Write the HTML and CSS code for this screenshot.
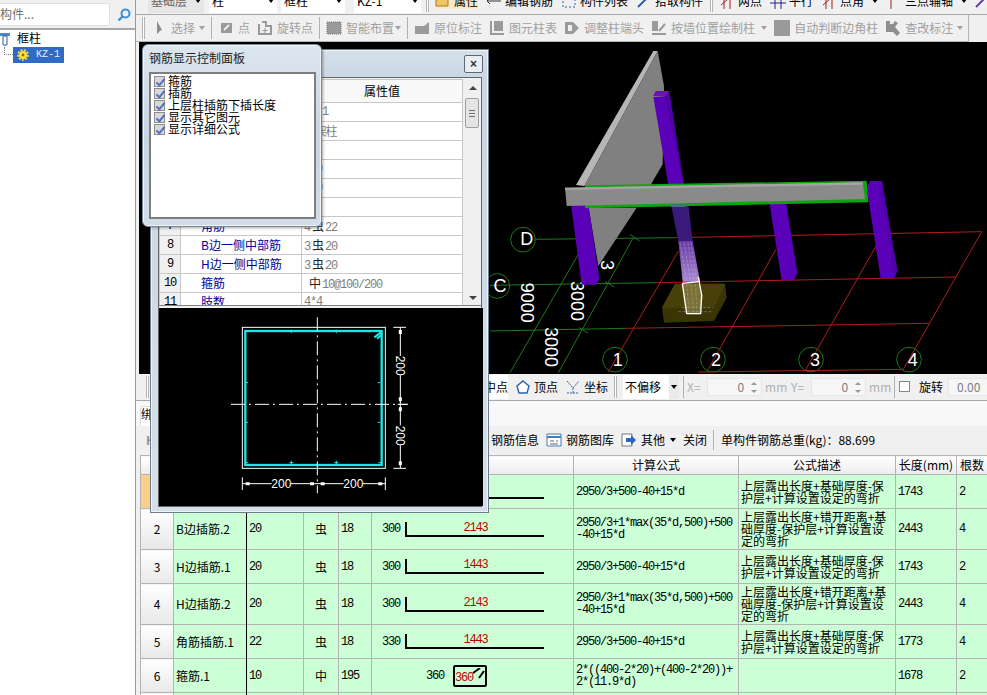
FILE: index.html
```html
<!DOCTYPE html>
<html lang="zh">
<head>
<meta charset="utf-8">
<title>钢筋显示控制面板</title>
<link rel="stylesheet" href="styles.css">
</head>
<body>
<div class="app">
  <aside class="side">
    <div class="search">
      <div class="search-box">构件...</div>
      <svg class="search-icon" width="14" height="14" viewBox="0 0 14 14"><circle cx="8.5" cy="5.5" r="4" fill="none" stroke="#3d8fd0" stroke-width="2"/><path d="M5.5 8.5 1.5 12.5" stroke="#3d8fd0" stroke-width="2.4"/></svg>
    </div>
    <div class="tree">
      <div class="tree-root">
        <svg width="10" height="14" viewBox="0 0 10 14"><path d="M0 1h10v3H0z" fill="#4a86c8"/><path d="M3 4h4v9H3z" fill="#fff" stroke="#2a5f9e"/></svg>
        <span>框柱</span>
      </div>
      <div class="tree-leaf">
        <i class="tree-link"></i>
        <div class="tree-sel">
          <svg width="12" height="12" viewBox="0 0 12 12"><circle cx="6" cy="6" r="4" fill="#ffe23a"/><circle cx="6" cy="6" r="5" fill="none" stroke="#ffe23a" stroke-width="1.6" stroke-dasharray="2 1.4"/><circle cx="6" cy="6" r="1.4" fill="#8a6a00"/></svg>
          <span class="tree-name">KZ-1</span>
        </div>
      </div>
    </div>
  </aside>

  <main class="main">
    <div class="bar-top">
      <div class="bar-top-in">
        <span class="sel s1">基础层<i class="arrow"></i></span>
        <span class="sel s2">柱<i class="arrow"></i></span>
        <span class="sel s3">框柱<i class="arrow"></i></span>
        <span class="sel s4">KZ-1<i class="arrow"></i></span>
        <i class="grip g1"></i>
        <span class="ti on"><svg class="ic" viewBox="0 0 16 16"><path d="M1 3h12v10H1z" fill="#f2c46a" stroke="#a87a20"/></svg>属性</span>
        <span class="ti"><svg class="ic" viewBox="0 0 16 16"><path d="M1 8h14M4 5l-3 3 3 3" stroke="#333" fill="none"/></svg>编辑钢筋</span>
        <span class="ti"><svg class="ic" viewBox="0 0 16 16"><path d="M2 2h12v12H2z" fill="none" stroke="#2a62a8" stroke-dasharray="2 2"/></svg>构件列表</span>
        <span class="ti"><svg class="ic" viewBox="0 0 16 16"><path d="M2 14 13 3" stroke="#2a62a8" stroke-width="2"/></svg>拾取构件</span>
        <i class="grip g2"></i>
        <span class="ti"><svg class="ic" viewBox="0 0 16 16"><path d="M2 12 14 2M5 0v16M11 0v16" stroke="#a02020"/></svg>两点</span>
        <span class="ti"><svg class="ic" viewBox="0 0 16 16"><path d="M0 4h16M0 10h16M5 0v16M11 0v16" stroke="#22228a"/></svg>平行</span>
        <span class="ti"><svg class="ic" viewBox="0 0 16 16"><path d="M2 12 14 2M5 0v16M11 0v16" stroke="#a02020"/></svg>点角<i class="arrow a-gap"></i></span>
        <span class="ti"><svg class="ic" viewBox="0 0 16 16"><path d="M1 4h15M5 0v16" stroke="#a02020"/></svg>三点辅轴<i class="arrow a-gap"></i></span>
        <svg class="ic" viewBox="0 0 16 16"><path d="M2 14 14 2" stroke="#6a3aa0" stroke-width="2"/></svg>
      </div>
    </div>

    <div class="bar-tools">
      <div class="tools">
        <i class="grip"></i>
        <span class="ti first"><svg class="ic" viewBox="0 0 16 16"><path d="M9 1v13l3-3 2-1z" fill="#8e8e8e" transform="translate(-3 0)"/></svg>选择<i class="caret"></i></span>
        <i class="sep"></i>
        <span class="ti"><svg class="ic" viewBox="0 0 16 16"><path d="M3 3h11v10H3z" fill="#9a9a9a"/><path d="M6 10l5-5" stroke="#eee" stroke-width="2"/></svg>点</span>
        <span class="ti"><svg class="ic" viewBox="0 0 16 16"><path d="M2 4v10h12V6H9V2H5" fill="none" stroke="#9a9a9a" stroke-width="2"/><path d="M8 8v5M5.500 10.500h5" stroke="#9a9a9a"/></svg>旋转点</span>
        <i class="sep"></i>
        <span class="ti"><svg class="ic" viewBox="0 0 16 16"><path d="M1 2h14v12H1z" fill="#9a9a9a" stroke="#777" stroke-dasharray="1 1"/></svg>智能布置<i class="caret caret-tight"></i></span>
        <i class="sep"></i>
        <span class="ti"><svg class="ic" viewBox="0 0 16 16"><path d="M1 6h9l5-4v12H1z" fill="#9a9a9a"/></svg>原位标注</span>
        <span class="ti"><svg class="ic" viewBox="0 0 16 16"><path d="M1 1v14h14v-2H3V1z" fill="#9a9a9a"/><path d="M5 1h9v10H5z" fill="#9a9a9a"/></svg>图元柱表</span>
        <span class="ti"><svg class="ic" viewBox="0 0 16 16"><path d="M1 2h8l6 6-6 6H1z" fill="#9a9a9a"/><path d="M4 5h4v6H4z" fill="#f0f0f0"/></svg>调整柱端头</span>
        <span class="ti"><svg class="ic" viewBox="0 0 16 16"><path d="M1 1h6v10H1z" fill="#9a9a9a"/><path d="M1 14h14M8 11l6-7" stroke="#9a9a9a" stroke-width="2"/></svg>按墙位置绘制柱<i class="caret caret-wide"></i></span>
        <span class="ti"><svg class="ic" viewBox="0 0 16 16"><path d="M0 0h16v16H0z" fill="#9a9a9a"/></svg>自动判断边角柱</span>
        <span class="ti"><svg class="ic" viewBox="0 0 16 16"><path d="M1 1h4v3h3l2-3 3 2-3 4 5 6-3 3-4-4H1z" fill="#8e8e8e"/></svg>查改标注<i class="caret"></i></span>
      </div>
    </div>

    <div class="view">
      <svg class="view-svg" viewBox="-1053 3 2544 996" width="848" height="332">
        <defs>
          <linearGradient id="fade" x1="0" y1="0" x2="0" y2="1"><stop offset="0" stop-color="#6a3aa8"/><stop offset="1" stop-color="#a88ad0"/></linearGradient>
        </defs>
        <g class="g-line">
          <path d="M135 595 555 590M0 733 500 725M0 870 405 862M430 590 205 995M265 640 60 995"/>
          <path d="M420 580l28 20M345 722l28 16M268 860l26 16"/>
          <circle cx="99" cy="596" r="37"/><circle cx="22" cy="735" r="37"/>
          <circle cx="375" cy="956" r="37"/><circle cx="669" cy="956" r="37"/><circle cx="963" cy="956" r="37"/><circle cx="1257" cy="956" r="37"/>
        </g>
        <g class="r-line">
          <path d="M555 590 1475 572M500 725 1398 708M405 862 1318 847M625 993 1240 985"/>
          <path d="M565 630 355 993M858 625 650 993M1158 615 945 990M1475 572 1240 985"/>
        </g>
        <g class="v-txt">
          <text x="110" y="612">D</text><text x="30" y="752">C</text>
          <text x="383" y="975">1</text><text x="678" y="975">2</text><text x="975" y="975">3</text><text x="1268" y="975">4</text>
          <text transform="translate(92 785) rotate(90)">9000</text>
          <text transform="translate(242 780) rotate(90)">3000</text>
          <text transform="translate(164 918) rotate(90)">3000</text>
          <text transform="translate(332 672) rotate(90)">3</text>
        </g>
        <path d="M258 432 490 30H503L283 435z" fill="#b6b6b6"/>
        <path d="M283 435 503 30 522 135 518 370 480 435zM296 500H440L325 675z" fill="#808080"/>
        <path d="M490 165 497 150H538L530 168z" fill="#6a10c0"/>
        <path d="M490 168H528L582 432H535z" fill="#5a00b8"/>
        <path d="M528 168 538 150 582 432z" fill="#5000a8"/>
        <path d="M543 490H595L608 600H565z" fill="#3a1a7a"/>
        <path d="M565 600H608L630 722H578z" fill="url(#fade)"/>
        <path d="M243 490H295L328 715 318 731H275z" fill="#5a00b8"/>
        <path d="M838 485H888L922 695 912 718H875z" fill="#5a00b8"/>
        <path d="M1130 440 1140 420H1176L1222 690 1212 712H1172z" fill="#5a00b8"/>
        <path d="M1176 420 1222 690 1212 712 1170 440z" fill="#5000a8"/>
        <path d="M516 800 555 728H705L710 770 672 840 522 845z" fill="#3b3506"/>
        <path d="M555 728H705L672 800 516 800z" fill="#474009"/>
        <path d="M285 433 1130 419 1135 484 285 502z" fill="#10a510"/>
        <path d="M225 440 1118 424 1125 474 230 495z" fill="#8a8a8a"/>
        <path d="M225 440 1118 424V431L225 447z" fill="#a4a4a4"/>
        <path d="M540 490H585V498H543z" fill="#4a6a90"/>
        <g class="rebar">
          <path d="M570 605 590 720M582 605 602 720M594 605 612 720M603 605 620 720"/>
          <path d="M590 730 598 820M603 730 612 820M616 730 622 820M565 812H665M575 800H668"/>
        </g>
        <path d="M577 727 625 722 638 765 632 820H592z" fill="#b8b070" opacity=".45"/>
        <path class="rebar-box" d="M577 727 625 722M625 708 635 762M577 727 590 818H632L635 762"/>
      </svg>
    </div>

    <div class="bar-snap">
      <i class="grip snap-grip"></i>
      <span class="ti snap-first on-w">中点</span>
      <span class="ti"><svg class="ic" viewBox="0 0 16 16"><path d="M8 2 14 7 12 14H4L2 7z" fill="#fff" stroke="#2a62a8" stroke-width="1.400"/></svg>顶点</span>
      <span class="ti"><svg class="ic" viewBox="0 0 16 16"><path d="M2 2 8 9 14 2M8 9v6M2 14h12" stroke="#2a62a8" stroke-dasharray="2 1" fill="none"/></svg>坐标</span>
      <i class="grip snap-g2"></i>
      <span class="drop">不偏移<i class="drop-arrow"><i class="arrow"></i></i></span>
      <i class="sep sep-snap"></i>
      <span class="dis xy">X=</span>
      <span class="num">0<i class="spin"></i></span>
      <span class="dis">mm</span>
      <span class="dis xy">Y=</span>
      <span class="num">0<i class="spin"></i></span>
      <span class="dis end">mm</span>
      <i class="sep sep-snap2"></i>
      <i class="box"></i>
      <span class="rot">旋转</span>
      <span class="num last">0.00</span>
    </div>

    <div class="bar-tab"><span class="tab">绑</span></div>

    <div class="bar-rebar">
      <span class="stub">H</span>
      <span class="ti rb-first">钢筋信息</span>
      <span class="ti"><svg class="ic" viewBox="0 0 16 16"><path d="M1 2h14v12H1z" fill="#fff" stroke="#4a7ab8"/><path d="M1 5h14" stroke="#4a7ab8" stroke-width="2"/><path d="M4 9h4M10 9h2M4 12h8" stroke="#666"/></svg>钢筋图库</span>
      <span class="ti"><svg class="ic" viewBox="0 0 16 16"><path d="M1 2h10v12H1z" fill="#fff" stroke="#777"/><path d="M5 6h5V3l5 5-5 5v-3H5z" fill="#2a62c8"/></svg>其他<i class="arrow small"></i></span>
      <span class="ti">关闭</span>
      <i class="sep sep-rb"></i>
      <span class="total">单构件钢筋总重(kg)：88.699</span>
    </div>

    <div class="grid-wrap">
      <table class="grid">
        <colgroup><col class="c1"><col class="c2"><col class="c3"><col class="c4"><col class="c5"><col class="c6"><col class="c7"><col class="c8"><col class="c9"><col class="c10"></colgroup>
        <thead>
          <tr class="h-head"><th>&nbsp;</th><th class="k">筋号</th><th>直径</th><th>级别</th><th>图号</th><th>图形</th><th>计算公式</th><th>公式描述</th><th>长度(mm)</th><th>根数</th></tr>
        </thead>
        <tbody>
          <tr class="h34"><td class="no cur">1</td><td class="k">B边插筋.1</td><td class="m">20</td><td class="g">虫</td><td class="m">18</td><td><div class="shape"><span class="sn">300</span><div class="bar-l"><span class="red">1443</span></div></div></td><td class="m">2950/3+500-40+15*d</td><td class="d">上层露出长度+基础厚度-保<br>护层+计算设置设定的弯折</td><td class="m">1743</td><td class="m">2</td></tr>
          <tr class="h41"><td class="no">2</td><td class="k">B边插筋.2</td><td class="m">20</td><td class="g">虫</td><td class="m">18</td><td><div class="shape"><span class="sn">300</span><div class="bar-l"><span class="red">2143</span></div></div></td><td class="m">2950/3+1*max(35*d,500)+500<br>-40+15*d</td><td class="d">上层露出长度+错开距离+基<br>础厚度-保护层+计算设置设<br>定的弯折</td><td class="m">2443</td><td class="m">4</td></tr>
          <tr class="h34"><td class="no">3</td><td class="k">H边插筋.1</td><td class="m">20</td><td class="g">虫</td><td class="m">18</td><td><div class="shape"><span class="sn">300</span><div class="bar-l"><span class="red">1443</span></div></div></td><td class="m">2950/3+500-40+15*d</td><td class="d">上层露出长度+基础厚度-保<br>护层+计算设置设定的弯折</td><td class="m">1743</td><td class="m">2</td></tr>
          <tr class="h41"><td class="no">4</td><td class="k">H边插筋.2</td><td class="m">20</td><td class="g">虫</td><td class="m">18</td><td><div class="shape"><span class="sn">300</span><div class="bar-l"><span class="red">2143</span></div></div></td><td class="m">2950/3+1*max(35*d,500)+500<br>-40+15*d</td><td class="d">上层露出长度+错开距离+基<br>础厚度-保护层+计算设置设<br>定的弯折</td><td class="m">2443</td><td class="m">4</td></tr>
          <tr class="h34"><td class="no">5</td><td class="k">角筋插筋.1</td><td class="m">22</td><td class="g">虫</td><td class="m">18</td><td><div class="shape"><span class="sn">330</span><div class="bar-l"><span class="red">1443</span></div></div></td><td class="m">2950/3+500-40+15*d</td><td class="d">上层露出长度+基础厚度-保<br>护层+计算设置设定的弯折</td><td class="m">1773</td><td class="m">4</td></tr>
          <tr class="h34"><td class="no">6</td><td class="k">箍筋.1</td><td class="m">10</td><td class="g">中</td><td class="m">195</td><td><div class="shape hoop"><span class="sn">360</span><div class="bar-h"><span class="red">360</span><svg class="hook" width="14" height="12" viewBox="0 0 14 12"><path d="M2 5 9 0M8 10 13 3" stroke="#000" stroke-width="2"/></svg></div></div></td><td class="m">2*((400-2*20)+(400-2*20))+<br>2*(11.9*d)</td><td class="d"></td><td class="m">1678</td><td class="m">2</td></tr>
          <tr class="h34"><td class="no"></td><td class="k"></td><td></td><td></td><td></td><td></td><td></td><td></td><td></td><td></td></tr>
        </tbody>
      </table>
    </div>
  </main>

  <section class="win-prop">
    <button class="win-close" type="button">×</button>
    <div class="prop-frame">
      <div class="prop-top">
        <table class="prop">
          <colgroup><col class="p1"><col class="p2"><col class="p3"></colgroup>
          <thead><tr><th></th><th>属性名称</th><th>属性值</th></tr></thead>
          <tbody>
            <tr><td class="pn">1</td><td class="pk">名称</td><td class="pv">KZ-1</td></tr>
            <tr><td class="pn">2</td><td class="pk">类别</td><td class="pv">框架柱</td></tr>
            <tr><td class="pn">3</td><td class="pk">截面编辑</td><td class="pv">否</td></tr>
            <tr><td class="pn">4</td><td class="pk">截面宽</td><td class="pv">400</td></tr>
            <tr><td class="pn">5</td><td class="pk">截面高</td><td class="pv">400</td></tr>
            <tr><td class="pn">6</td><td class="pk">全部纵筋</td><td class="pv"></td></tr>
            <tr><td class="pn">7</td><td class="pk">角筋</td><td class="pv">4<span class="gl">虫</span>22</td></tr>
            <tr><td class="pn">8</td><td class="pk">B边一侧中部筋</td><td class="pv">3<span class="gl">虫</span>20</td></tr>
            <tr><td class="pn">9</td><td class="pk">H边一侧中部筋</td><td class="pv">3<span class="gl">虫</span>20</td></tr>
            <tr><td class="pn">10</td><td class="pk">箍筋</td><td class="pv pv-in"><span class="gl">中</span>10@100/200</td></tr>
            <tr><td class="pn">11</td><td class="pk">肢数</td><td class="pv">4*4</td></tr>
          </tbody>
        </table>
        <div class="sb">
          <i class="sb-up"></i>
          <i class="sb-thumb"></i>
          <i class="sb-dn"></i>
        </div>
      </div>
      <svg class="preview" viewBox="54 294 972 594" width="324" height="198">
        <rect x="304" y="352" width="429" height="423" class="p-w"/>
        <rect x="313" y="363" width="409" height="402" class="p-c"/>
        <path class="p-c2" d="M700 382 720 367M708 386 722 374"/>
        <path class="p-d" d="M315 518h6M315 637h6M710 518h8M710 637h8M451 359v10M586 359v10M451 752v12M586 752v12M445 758h12M580 758h12M314 758h8M712 758h8"/>
        <path class="p-dash" d="M529 322V850M270 583H800"/>
        <path class="p-w2" d="M757 352H795M757 775H795M778 352V438M778 496V646M778 706V775M770 583H800M304 802V840M733 802V840M304 821H392M450 821H608M666 821H733"/>
        <path class="p-tick" d="M778 360V372M778 562V574M778 592V604M778 754V766M314 821H326M507 821H519M539 821H551M712 821H724"/>
        <text class="p-t" x="421" y="834">200</text>
        <text class="p-t" x="637" y="834">200</text>
        <text class="p-t" transform="translate(765 467) rotate(90)">200</text>
        <text class="p-t" transform="translate(765 677) rotate(90)">200</text>
      </svg>
    </div>
  </section>

  <section class="win-ctl">
    <h2 class="ctl-title">钢筋显示控制面板</h2>
    <div class="ctl-list">
      <label class="ctl-row"><i class="chk"></i>箍筋</label>
      <label class="ctl-row"><i class="chk"></i>插筋</label>
      <label class="ctl-row"><i class="chk"></i>上层柱插筋下插长度</label>
      <label class="ctl-row"><i class="chk"></i>显示其它图元</label>
      <label class="ctl-row"><i class="chk"></i>显示详细公式</label>
    </div>
  </section>
</div>
</body>
</html>
```

FILE: styles.css
```css
* { box-sizing: border-box; }
html, body { margin: 0; height: 100%; overflow: hidden; }
body { font: 12px/14px "Noto Sans CJK SC", "Liberation Sans", sans-serif; color: #000; background: #f0f0f0; }
i { display: block; font-style: normal; }
.app { position: relative; display: flex; width: 987px; height: 695px; overflow: hidden; }

/* sidebar */
.side { width: 136px; flex: none; background: #fff; border-right: 1px solid #9a9a9a; }
.search { display: flex; align-items: center; height: 30px; background: #f0f0f0; border-bottom: 2px solid #a8a8a8; padding-top: 1px; }
.search-box { width: 110px; height: 23px; background: #fff; border: 1px solid #e2e2e2; border-left: 0; border-radius: 0 3px 3px 0; color: #707070; font-size: 12px; line-height: 20px; }
.search-icon { margin-left: 7px; }
.tree-root { display: flex; align-items: center; gap: 7px; height: 17px; font-size: 12px; line-height: 12px; }
.tree-root span { margin-top: -2px; }
.tree-leaf { display: flex; align-items: center; height: 16px; }
.tree-link { width: 13px; height: 8px; margin: -8px 0 0 4px; border-left: 1px dotted #808080; border-bottom: 1px dotted #808080; }
.tree-sel { display: flex; align-items: center; gap: 7px; width: 51px; height: 16px; margin-left: -4px; padding-left: 4px; background: #316ac5; color: #fff; }
.tree-name { font: 10px/16px "Liberation Mono", monospace; color: #e8f0ff; }

/* main column */
.main { flex: 1; min-width: 0; display: flex; flex-direction: column; }
.ti { display: flex; flex: none; align-items: center; gap: 4px; white-space: nowrap; }
.ti + .ti { margin-left: 1px; }
.ic { width: 16px; height: 16px; flex: none; }
.arrow { width: 0; height: 0; border: 3px solid transparent; border-top: 4px solid #000; border-bottom: 0; }
.arrow.small { margin-left: 1px; }
.a-gap { margin-left: 5px; }
.grip { width: 3px; height: 22px; flex: none; border: 1px solid #b4b4b4; border-width: 0 1px; background: #fff; }
.sep { width: 1px; height: 22px; flex: none; background: #b0b0b0; }

.bar-top { height: 15px; flex: none; overflow: hidden; border-bottom: 1px solid #a8a8a8; }
.bar-top-in { display: flex; align-items: center; height: 26px; margin-top: -12px; padding-left: 12px; }
.sel { display: flex; flex: none; align-items: center; justify-content: space-between; height: 24px; padding: 0 3px; background: #fff; }
.s1 { width: 56px; background: #e6e6e6; color: #666; }
.s2 { width: 68px; margin-left: 5px; }
.s3 { width: 64px; margin-left: 4px; }
.s4 { width: 67px; margin-left: 9px; font-size: 12px; }
.g1 { margin: 0 6px 0 5px; }
.g2 { margin: 0 6px 0 0; }
.bar-top-in .ti { gap: 3px; margin-right: 7px; }
.bar-top-in .on { background: #f7e9c8; }

.bar-tools { height: 27px; flex: none; padding-right: 18px; }
.tools { display: flex; align-items: center; gap: 6px; height: 27px; padding-left: 6px; color: #a0a0a0; border-right: 1px solid #b4b4b4; border-bottom: 1px solid #b4b4b4; }
.caret { width: 6px; height: 0; border: 3px solid transparent; border-top: 4px solid #a0a0a0; border-bottom: 0; }
.caret-wide { margin-left: 2px; }
.caret-tight { margin-left: -3px; }

.view { height: 332px; flex: none; margin-left: 3px; background: #000; overflow: hidden; }
.view-svg { display: block; }
.g-line { fill: none; stroke: #1c7a1c; stroke-width: 3; }
.r-line { fill: none; stroke: #b01c1c; stroke-width: 3; }
.rebar { fill: none; stroke: #d8d0e8; stroke-width: 1.5; stroke-dasharray: 8 5; opacity: .7; }
.rebar-box { fill: none; stroke: #fff; stroke-width: 4; }
.v-txt { font: 54px "Liberation Sans", sans-serif; fill: #fff; text-anchor: middle; }

/* snap bar */
.bar-snap { display: flex; align-items: center; height: 27px; padding-bottom: 1px; flex: none; background: #f0f0f0; border-bottom: 1px solid #a8a8a8; overflow: hidden; }
.snap-grip { margin-left: 10px; }
.snap-first { margin-left: 335px; }
.bar-snap .ti { margin-right: 6px; gap: 3px; }
.on-w { background: #fff; height: 24px; }
.snap-g2 { margin: 0 6px 0 0; }
.drop { display: flex; flex: none; align-items: center; justify-content: space-between; width: 56px; height: 24px; padding-left: 2px; background: #fff; white-space: nowrap; }
.drop-arrow { display: flex; flex: none; align-items: center; justify-content: center; width: 10px; height: 24px; background: #eaeaea; }
.sep-snap { margin: 0 3px 0 4px; }
.sep-snap2 { margin: 0 4px 0 3px; }
.dis { flex: none; width: 22px; margin-right: 4px; color: #b0b0b0; font-size: 12px; }
.dis.xy { width: 16px; margin-right: 0; }
.dis.end { margin-right: 0; }
.num { position: relative; display: block; flex: none; width: 55px; height: 18px; margin: 0 3px 0 4px; padding-right: 17px; background: #f6f6f6; border: 1px solid #e6e6e6; text-align: right; color: #808080; line-height: 16px; }
.spin { position: absolute; right: 4px; top: 3px; width: 6px; height: 11px; }
.spin::before, .spin::after { content: ""; position: absolute; left: 0; border: 3px solid transparent; }
.spin::before { top: 0; border-top: 0; border-bottom: 3px solid #999; }
.spin::after { bottom: 0; border-bottom: 0; border-top: 3px solid #999; }
.box { width: 11px; height: 11px; flex: none; background: #fff; border: 1px solid #888; }
.rot { flex: none; margin-left: 9px; white-space: nowrap; }
.num.last { width: 50px; margin: 0 0 0 5px; padding: 0 0 0 8px; text-align: left; }

.bar-tab { height: 25px; flex: none; background: #f8f8f8; padding: 5px 0 0 4px; }
.tab { display: block; width: 14px; height: 20px; background: #fff; border: 1px solid #ddd; border-bottom: 0; border-radius: 3px 3px 0 0; }
.bar-rebar { display: flex; align-items: center; height: 27px; flex: none; background: #f0f0f0; }
.stub { width: 10px; margin-left: 10px; color: #909090; font-weight: 700; }
.rb-first { margin-left: 335px; }
.bar-rebar .ti { margin-right: 6px; }
.sep-rb { margin: 0 7px 0 0; height: 20px; }

/* grid */
.grid-wrap { flex: 1; min-height: 0; margin: 2px 0 0 4px; overflow: hidden; background: #fff; }
.grid { width: 847px; border-collapse: collapse; table-layout: fixed; }
.c1 { width: 33px; } .c2 { width: 73px; } .c3 { width: 57px; } .c4 { width: 35px; } .c5 { width: 33px; }
.c6 { width: 202px; } .c7 { width: 165px; } .c8 { width: 157px; } .c9 { width: 61px; } .c10 { width: 31px; }
.grid th, .grid td { border: 1px solid #b4b4b4; padding: 0 2px; white-space: nowrap; overflow: hidden; font-weight: 400; }
.grid th { background: linear-gradient(#fff, #ececec); height: 19px; }
.grid td { background: #ccffd6; }
.h-head { height: 19px; }
.h34 { height: 34px; }
.h41 { height: 41px; }
.grid td.no { background: linear-gradient(#fff, #e8e8e8); text-align: center; }
.grid td.cur { background: #f8d088; }
.grid .k { position: relative; overflow: visible; }
.grid .k::after { content: ""; position: absolute; top: -1px; bottom: -1px; right: -1px; width: 1px; background: #000; }
.m { font: 12px/12px "Liberation Mono", monospace; letter-spacing: -1.2px; }
.d { line-height: 12px; }
.g { text-align: center; }
.shape { display: flex; align-items: center; padding-left: 8px; height: 15px; }
.sn { width: 23px; font: 12px/14px "Liberation Mono", monospace; letter-spacing: -1.2px; }
.bar-l { position: relative; width: 139px; height: 15px; border-left: 2px solid #000; border-bottom: 2px solid #000; text-align: center; }
.red { color: #c00000; font: 12px/12px "Liberation Mono", monospace; letter-spacing: -1.2px; }
.bar-l .red { position: relative; top: -3px; }
.hoop { padding-left: 52px; height: 22px; }
.hoop .sn { width: 27px; }
.bar-h { position: relative; flex: none; width: 34px; height: 22px; border: 2px solid #000; border-radius: 2px; }
.bar-h .red { position: absolute; left: 0; bottom: 1px; }
.hook { position: absolute; right: 0; top: 1px; }

/* properties window */
.win-prop { position: absolute; left: 150px; top: 49px; width: 339px; height: 464px; padding: 27px 6px 6px 7px; background: linear-gradient(#d5e0ea, #c9d6e3 30px, #d4dfe9); border: 1px solid #6f7d8a; box-shadow: inset 0 0 0 1px #eef3f7; }
.win-close { position: absolute; right: 5px; top: 5px; width: 19px; height: 18px; padding: 0; background: #e8eef4; border: 1px solid #5c6874; border-radius: 2px; font: 700 12px/14px "Liberation Sans", sans-serif; color: #333; }
.prop-frame { display: flex; flex-direction: column; height: 430px; background: #f0f0f0; border: 1px solid #666; }
.prop-top { position: relative; display: flex; height: 228px; flex: none; overflow: hidden; padding-top: 1px; border-bottom: 1px solid #808080; margin-bottom: 2px; }
.prop { width: 303px; flex: none; height: 0; border-collapse: collapse; table-layout: fixed; }
.p1 { width: 21px; } .p2 { width: 121px; } .p3 { width: 161px; }
.prop th, .prop td { border: 1px solid #c8c8c8; padding: 0; height: 19px; font-weight: 400; white-space: nowrap; background: #fff; }
.prop th { height: 23px; text-align: center; background: #f8f8f8; }
.prop .pn { background: #f0f0f0; text-align: center; font: 12px "Liberation Mono", monospace; letter-spacing: -1.2px; }
.prop .pk { color: #00009c; padding-left: 20px; }
.prop .pv { color: #808080; padding-left: 2px; font: 12px "Liberation Mono", "Noto Sans CJK SC", monospace; letter-spacing: -1.2px; }
.prop .pv-in { padding-left: 5px; }
.gl { font: 12px "Noto Sans CJK SC", sans-serif; letter-spacing: 0; color: #222; margin: 0 1px 0 2px; }
.sb { position: relative; flex: none; width: 19px; margin-left: 1px; background: #f0f0f0; }
.sb-up, .sb-dn { position: absolute; left: 5px; width: 0; height: 0; border: 4px solid transparent; }
.sb-up { top: 7px; border-top: 0; border-bottom: 4px solid #444; }
.sb-dn { bottom: 5px; border-bottom: 0; border-top: 4px solid #444; }
.sb-thumb { position: absolute; left: 1px; top: 19px; width: 14px; height: 30px; background: #e4e4e4; border: 1px solid #a0a0a0; border-radius: 2px; }
.sb-thumb::after { content: ""; position: absolute; left: 3px; top: 11px; width: 6px; height: 7px; background: repeating-linear-gradient(#707070 0 1px, transparent 1px 3px); }
.preview { display: block; flex: none; background: #000; }
.p-w, .p-c { fill: none; }
.p-w { stroke: #fff; stroke-width: 3; }
.p-c { stroke: #1ee6e6; stroke-width: 7; }
.p-c2 { stroke: #1ee6e6; stroke-width: 6; fill: none; }
.p-d { stroke: #1ee6e6; stroke-width: 3; }
.p-dash { stroke: #fff; stroke-width: 3; stroke-dasharray: 42 12 6 12; fill: none; }
.p-w2 { stroke: #fff; stroke-width: 3; fill: none; }
.p-tick { stroke: #fff; stroke-width: 9; }
.p-t { font: 36px "Liberation Sans", sans-serif; fill: #fff; text-anchor: middle; }

/* control window */
.win-ctl { position: absolute; left: 142px; top: 44px; width: 180px; height: 183px; padding: 6px 5px 7px 6px; background: linear-gradient(#dce6ef, #c8d5e2 50%, #d2dde8); border: 1px solid #7c8a97; border-radius: 6px; box-shadow: 1px 1px 3px rgba(0, 0, 0, .35), inset 0 0 0 1px #eef3f7; }
.ctl-title { margin: 0; height: 21px; font: 400 12px/14px "Noto Sans CJK SC", sans-serif; color: #222; }
.ctl-list { height: 147px; padding: 1px 0 0 3px; background: #fff; border: 2px solid #7e7e7e; box-shadow: inset 0 0 0 1px #fff; }
.ctl-row { display: flex; align-items: center; gap: 3px; height: 12px; white-space: nowrap; }
.chk { position: relative; width: 11px; height: 11px; flex: none; background: #d6d8de; border: 1px solid #8d8d8d; }
.chk::after { content: ""; position: absolute; left: 3px; top: 0; width: 3px; height: 7px; border: solid #5a70b8; border-width: 0 2px 2px 0; transform: rotate(40deg); }
```
